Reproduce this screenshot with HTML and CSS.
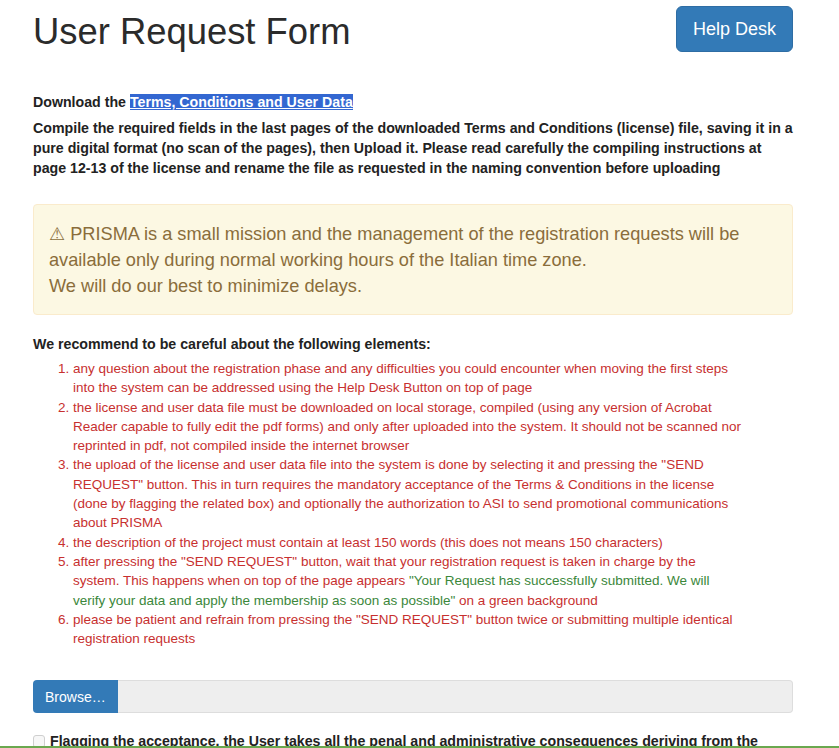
FILE: index.html
```html
<!DOCTYPE html>
<html lang="en">
<head>
    <meta charset="UTF-8">
    <meta name="viewport" content="width=device-width, initial-scale=1.0">
    <title>User Request Form</title>
    <link rel="stylesheet" href="styles.css">
</head>
<body>
    <div class="container">
        <div class="page-header">
            <h1>User Request Form</h1>
            <a href="#" class="btn-help">Help Desk</a>
        </div>

        <!-- Download instructions -->
        <p class="download-line">Download the <a href="#" class="terms-link">Terms, Conditions and User Data</a></p>
        <p class="compile-text">Compile the required fields in the last pages of the downloaded Terms and Conditions (license) file, saving it in a pure digital format (no scan of the pages), then Upload it. Please read carefully the compiling instructions at page 12-13 of the license and rename the file as requested in the naming convention before uploading</p>

        <div class="alert-warning">
            <span class="warn-icon">&#9888;</span> PRISMA is a small mission and the management of the registration requests will be available only during normal working hours of the Italian time zone.<br>
            We will do our best to minimize delays.
        </div>

        <!-- Recommendations -->
        <p class="recommend-title">We recommend to be careful about the following elements:</p>
        <ol class="recommend-list">
            <li>any question about the registration phase and any difficulties you could encounter when moving the first steps into the system can be addressed using the Help Desk Button on top of page</li>
            <li>the license and user data file must be downloaded on local storage, compiled (using any version of Acrobat Reader capable to fully edit the pdf forms) and only after uploaded into the system. It should not be scanned nor reprinted in pdf, not compiled inside the internet browser</li>
            <li>the upload of the license and user data file into the system is done by selecting it and pressing the "SEND REQUEST" button. This in turn requires the mandatory acceptance of the Terms &amp; Conditions in the license (done by flagging the related box) and optionally the authorization to ASI to send promotional communications about PRISMA</li>
            <li>the description of the project must contain at least 150 words (this does not means 150 characters)</li>
            <li>after pressing the "SEND REQUEST" button, wait that your registration request is taken in charge by the system. This happens when on top of the page appears <span class="text-success">"Your Request has successfully submitted. We will verify your data and apply the membership as soon as possible"</span> on a green background</li>
            <li>please be patient and refrain from pressing the "SEND REQUEST" button twice or submitting multiple identical registration requests</li>
        </ol>

        <!-- File upload -->
        <div class="file-input">
            <label class="btn-browse">Browse&hellip;</label>
            <div class="file-name"></div>
        </div>

        <div class="checkbox-row">
            <input type="checkbox" id="accept">
            <label for="accept">Flagging the acceptance, the User takes all the penal and administrative consequences deriving from the</label>
        </div>
    </div>

    <div class="bottom-bar"></div>
</body>
</html>
```

FILE: styles.css
```css
body {
    font-family: "Liberation Sans", Arial, sans-serif;
    font-size: 14px;
    line-height: 20px;
    margin: 0;
    padding: 0;
    background: #ffffff;
    color: #333;
}

.container {
    max-width: 760px;
    margin: 0 33px;
}

.page-header {
    display: flex;
    justify-content: space-between;
    align-items: flex-start;
}

h1 {
    font-size: 36.4px;
    font-weight: normal;
    line-height: 39.6px;
    margin: 12px 0 0;
    color: #2b2b2b;
}

.btn-help {
    display: block;
    margin-top: 6px;
    padding: 10px 16px;
    font-size: 18px;
    line-height: 24px;
    color: #fff;
    background: #337ab7;
    border: 1px solid #2e6da4;
    border-radius: 6px;
    text-decoration: none;
}

.download-line {
    margin: 40px 0 6px;
    font-size: 14.2px;
    font-weight: bold;
    color: #222;
}

.terms-link {
    color: #fff;
    background: #3367d1;
    text-decoration: underline;
}

.compile-text {
    margin: 0 0 26px;
    font-size: 14.2px;
    font-weight: bold;
    color: #222;
}

.alert-warning {
    background: #fcf8e3;
    border: 1px solid #faebcc;
    border-radius: 4px;
    color: #8a6d3b;
    padding: 16px 15px 15px;
    font-size: 18.2px;
    line-height: 26px;
}

.warn-icon {
    font-family: "DejaVu Sans", sans-serif;
    font-size: 18px;
}

.recommend-title {
    margin: 19px 0 5px;
    font-size: 14.2px;
    font-weight: bold;
    color: #222;
}

.recommend-list {
    margin: 0 48px 0 0;
    padding-left: 40px;
    font-size: 13.5px;
    line-height: 19.3px;
    color: #c7302f;
}

.text-success {
    color: #3b873b;
}

.file-input {
    display: flex;
    margin-top: 32px;
    height: 33px;
}

.btn-browse {
    display: flex;
    align-items: center;
    padding: 0 12px;
    background: #337ab7;
    color: #fff;
    border-radius: 4px 0 0 4px;
}

.file-name {
    flex: 1;
    background: #eeeeee;
    border: 1px solid #ddd;
    border-left: none;
    border-radius: 0 4px 4px 0;
}

.checkbox-row {
    display: flex;
    align-items: center;
    gap: 5px;
    margin-top: 18px;
    font-size: 14.2px;
    font-weight: bold;
    color: #222;
}

.checkbox-row input {
    appearance: none;
    margin: 0;
    width: 12px;
    height: 13px;
    background: #f7f7f7;
    border: 1px solid #cfcfcf;
    border-radius: 3px;
}

.bottom-bar {
    position: fixed;
    left: 0;
    right: 0;
    bottom: 0;
    height: 2px;
    background: #6aa84f;
}
```
